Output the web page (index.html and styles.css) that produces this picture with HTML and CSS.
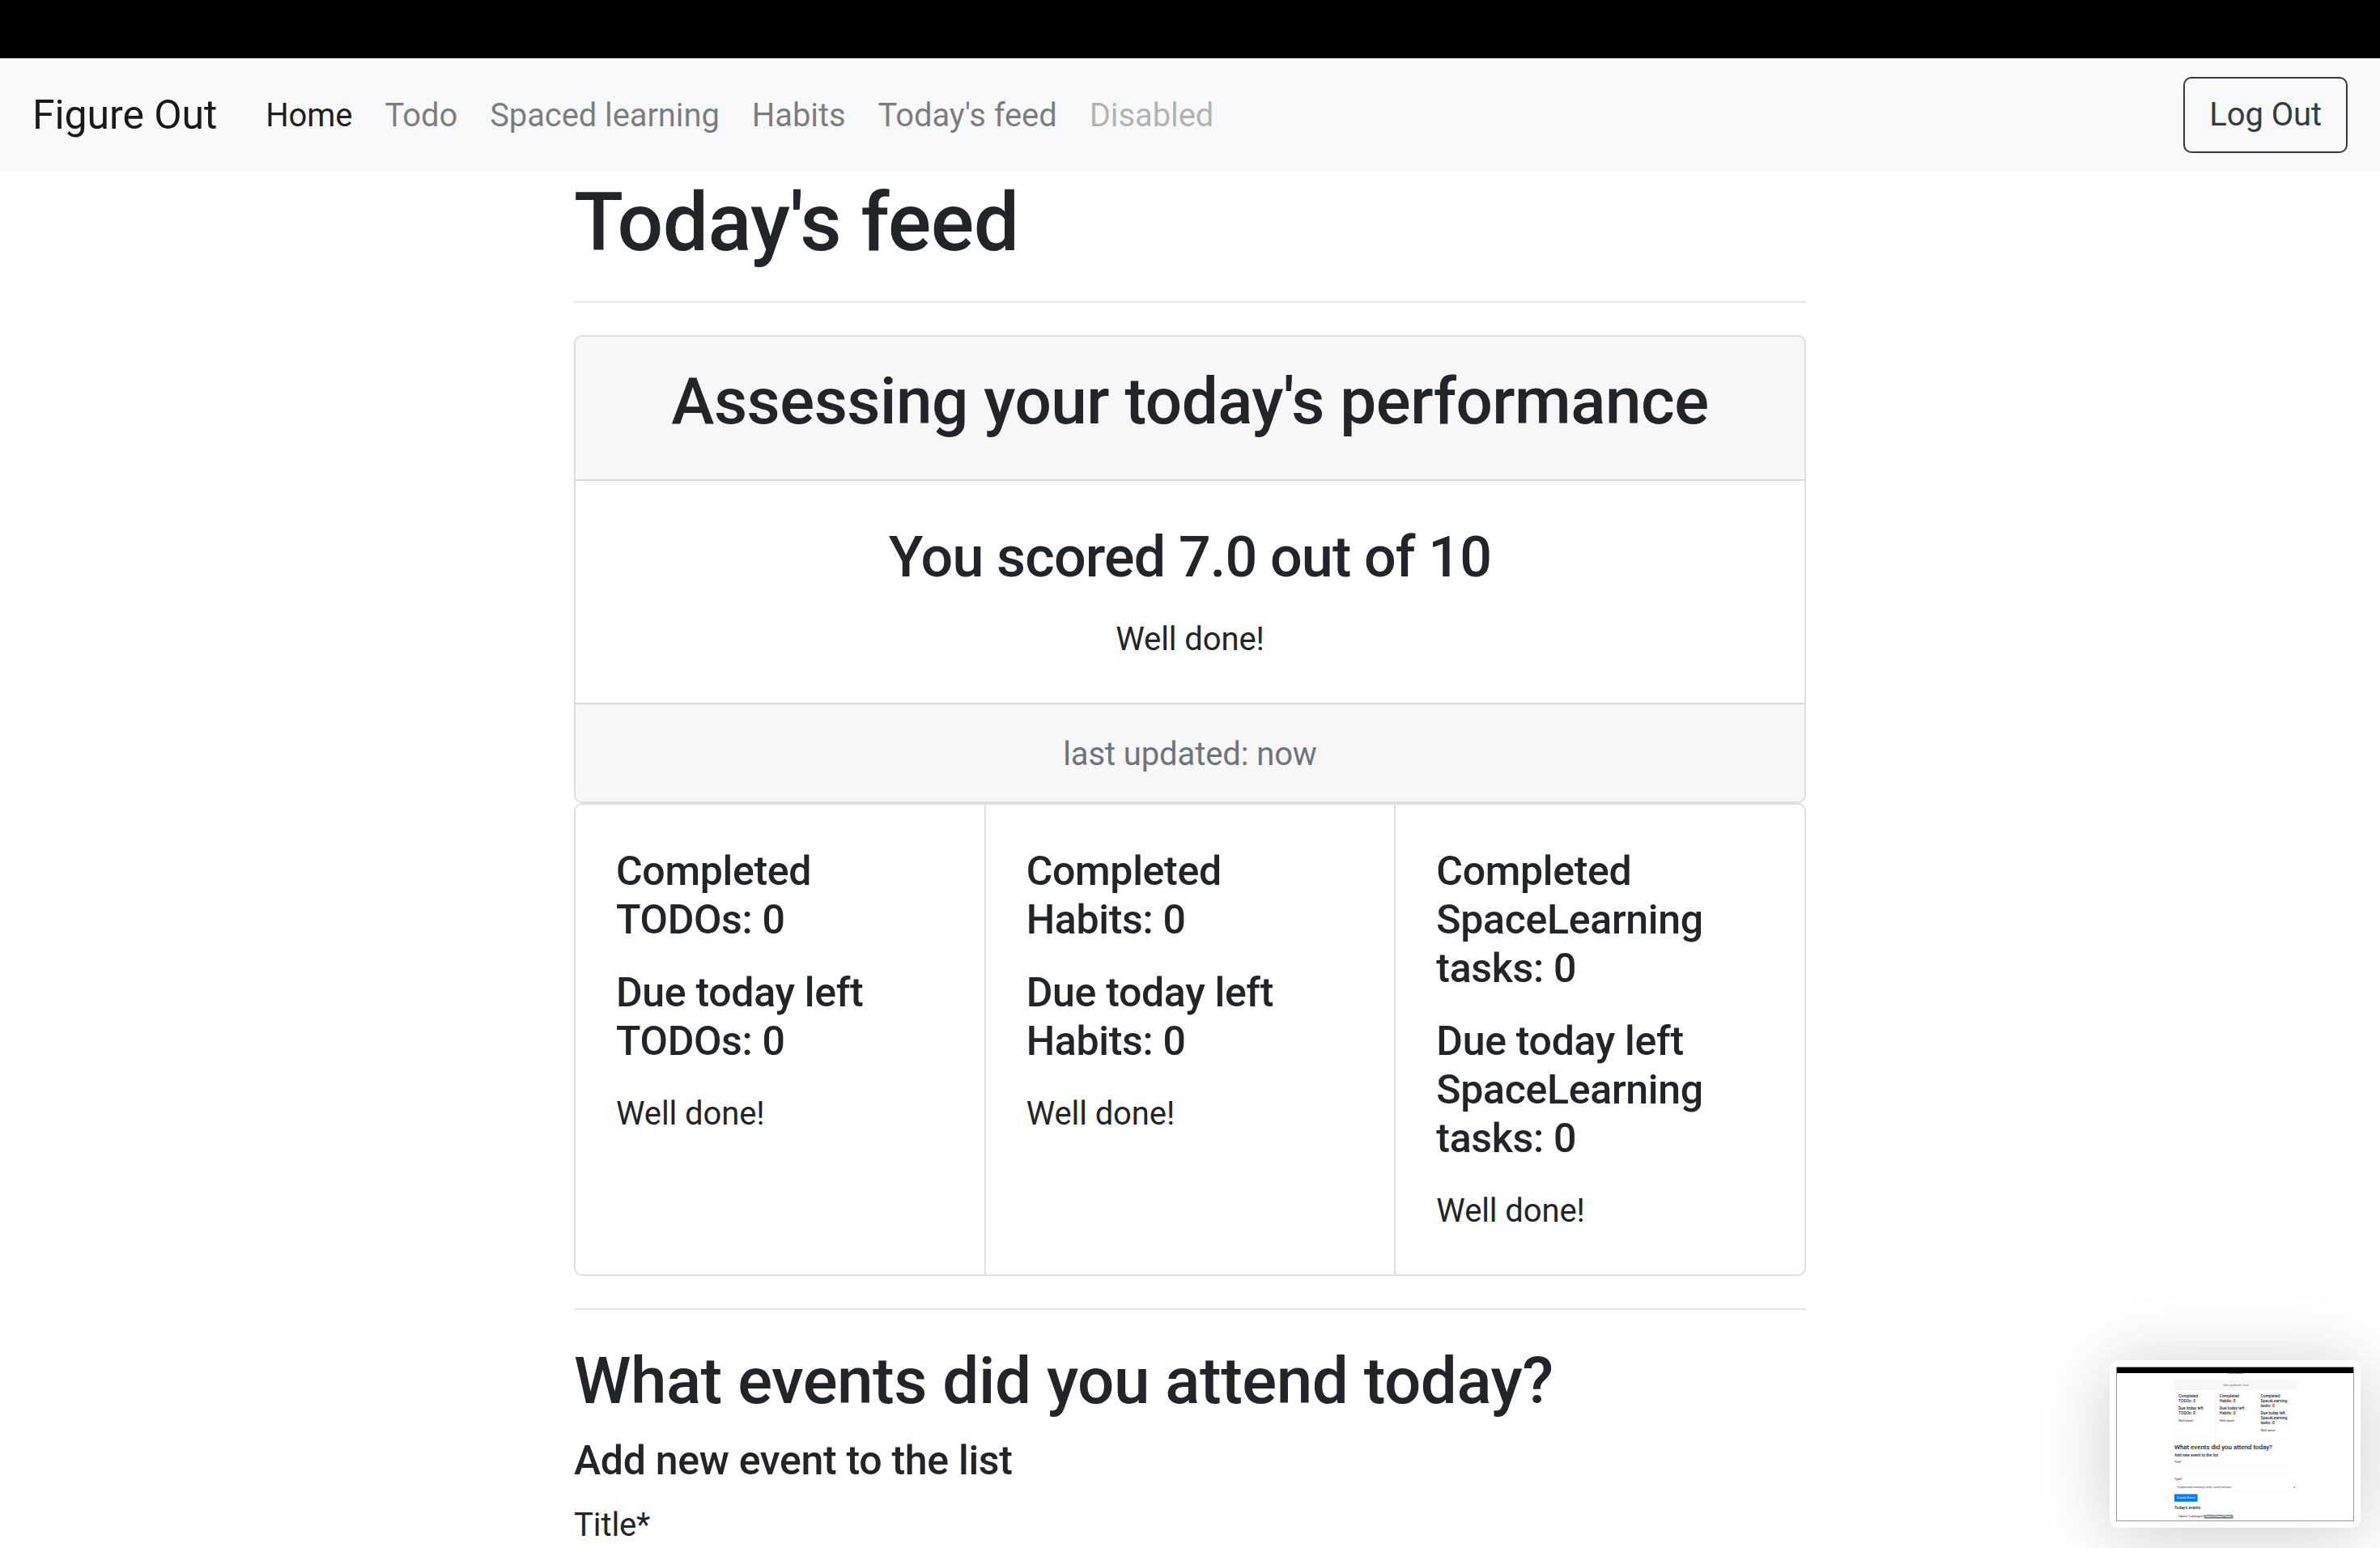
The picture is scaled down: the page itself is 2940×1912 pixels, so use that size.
FILE: index.html
```html
<!DOCTYPE html>
<html lang="en">
<head>
<meta charset="utf-8">
<title>Figure Out</title>
<link rel="stylesheet" href="styles.css">
</head>
<body>
<div class="topbar"></div>
<div class="page">
  <nav class="navbar">
    <a class="brand">Figure Out</a>
    <ul class="nav">
      <li><a class="nav-link active">Home</a></li>
      <li><a class="nav-link">Todo</a></li>
      <li><a class="nav-link">Spaced learning</a></li>
      <li><a class="nav-link">Habits</a></li>
      <li><a class="nav-link">Today's feed</a></li>
      <li><a class="nav-link disabled">Disabled</a></li>
    </ul>
    <button type="button" class="btn btn-outline">Log Out</button>
  </nav>
  <main class="container">
    <h1>Today's feed</h1>
    <hr>
    <section class="card">
      <div class="card-header"><h2>Assessing your today's performance</h2></div>
      <div class="card-body centered">
        <h3 class="card-title">You scored 7.0 out of 10</h3>
        <p class="card-text">Well done!</p>
      </div>
      <div class="card-footer">last updated: now</div>
    </section>
    <div class="card-group">
      <div class="card">
        <div class="card-body">
          <h5 class="card-title">Completed TODOs: 0</h5>
          <h5 class="card-title">Due today left TODOs: 0</h5>
          <p class="card-text">Well done!</p>
        </div>
      </div>
      <div class="card">
        <div class="card-body">
          <h5 class="card-title">Completed Habits: 0</h5>
          <h5 class="card-title">Due today left Habits: 0</h5>
          <p class="card-text">Well done!</p>
        </div>
      </div>
      <div class="card">
        <div class="card-body">
          <h5 class="card-title">Completed SpaceLearning tasks: 0</h5>
          <h5 class="card-title">Due today left SpaceLearning tasks: 0</h5>
          <p class="card-text">Well done!</p>
        </div>
      </div>
    </div>
    <hr>
    <h2>What events did you attend today?</h2>
    <h5>Add new event to the list</h5>
    <form class="event-form">
      <div class="form-group">
        <label>Title*</label>
      </div>
    </form>
  </main>
</div>

<div class="thumb">
  <div class="shot">
    <div class="mini">
      <div class="topbar mini-bar"></div>
      <div class="mini-view">
        <div class="container mini-content">
          <section class="card mini-card">
            <div class="card-body centered">
              <p class="card-text">Well done!</p>
            </div>
            <div class="card-footer">last updated: now</div>
          </section>
          <div class="card-group">
            <div class="card">
              <div class="card-body">
                <h5 class="card-title">Completed TODOs: 0</h5>
                <h5 class="card-title">Due today left TODOs: 0</h5>
                <p class="card-text">Well done!</p>
              </div>
            </div>
            <div class="card">
              <div class="card-body">
                <h5 class="card-title">Completed Habits: 0</h5>
                <h5 class="card-title">Due today left Habits: 0</h5>
                <p class="card-text">Well done!</p>
              </div>
            </div>
            <div class="card">
              <div class="card-body">
                <h5 class="card-title">Completed SpaceLearning tasks: 0</h5>
                <h5 class="card-title">Due today left SpaceLearning tasks: 0</h5>
                <p class="card-text">Well done!</p>
              </div>
            </div>
          </div>
          <hr>
          <h2>What events did you attend today?</h2>
          <h5>Add new event to the list</h5>
          <form class="event-form">
            <div class="form-group">
              <label>Title*</label>
              <input class="form-control" type="text">
            </div>
            <div class="form-group">
              <label>Type*</label>
              <div class="select-wrap">
                <select class="custom-select"><option>Unplanned meeting after work/school</option></select>
                <svg class="select-arrow" viewBox="0 0 4 5"><path fill="#343a40" d="M2 0L0 2h4zm0 5L0 3h4z"/></svg>
              </div>
            </div>
            <button type="button" class="btn btn-primary">Create Event</button>
          </form>
          <h5 class="events-title">Today's events</h5>
          <ul class="list-group">
            <li class="list-group-item">Opera "Lohengrin"<span class="badge">Concert/Cinema/Theatre</span></li>
          </ul>
        </div>
      </div>
    </div>
  </div>
</div>
</body>
</html>
```

FILE: styles.css
```css
* { box-sizing: border-box; }
html { overflow: hidden; }
body {
  margin: 0;
  font-family: Roboto, "Liberation Sans", Arial, sans-serif;
  font-size: 40px;
  line-height: 1.5;
  letter-spacing: -0.1px;
  color: #212529;
  background: #fff;
}
.topbar { height: 72px; background: #000; }

.navbar {
  display: flex;
  align-items: center;
  padding: 20px 40px;
  background: #f8f9fa;
}
.brand {
  font-size: 50px;
  line-height: 75px;
  padding: 13px 0 12px;
  margin-right: 40px;
  color: rgba(0,0,0,.9);
}
.nav { display: flex; list-style: none; margin: 0; padding: 0; }
.nav-link { display: block; padding: 21px 20px 19px; color: rgba(0,0,0,.5); }
.nav-link.active { color: rgba(0,0,0,.9); }
.nav-link.disabled { color: rgba(0,0,0,.3); }

.btn {
  font: inherit;
  letter-spacing: inherit;
  line-height: 60px;
  padding: 15px 30px;
  border: 2px solid transparent;
  border-radius: 10px;
  background: transparent;
}
.btn-outline { margin-left: auto; color: #343a40; border-color: #343a40; }
.btn-primary { color: #fff; background: #007bff; border-color: #007bff; }

.container { width: 1522px; margin: 0 auto; }
h1, h2, h3, h5 {
  margin: 0 0 20px;
  font-weight: 500;
  line-height: 1.2;
  letter-spacing: -0.006em;
}
h1 { font-size: 100px; padding-top: 6px; line-height: 114px; }
h2 { font-size: 80px; }
h3 { font-size: 70px; letter-spacing: -0.012em; }
h5 { font-size: 50px; }
hr { margin: 40px 0; border: 0; border-top: 2px solid rgba(0,0,0,.1); }

.card {
  background: #fff;
  border: 2px solid rgba(0,0,0,.125);
  border-radius: 10px;
}
.card-header {
  padding: 32px 50px 28px;
  background: rgba(0,0,0,.03);
  border-bottom: 2px solid rgba(0,0,0,.125);
  border-radius: 8px 8px 0 0;
  text-align: center;
}
.card-body { padding: 52px 50px 48px; }
.centered { text-align: center; }
.card-footer {
  padding: 32px 50px 28px;
  background: rgba(0,0,0,.03);
  border-top: 2px solid rgba(0,0,0,.125);
  border-radius: 0 0 8px 8px;
  text-align: center;
  color: #6c757d;
}
.card-title { margin-bottom: 30px; }
.card-text { margin: 0; }

.card-group { display: flex; }
.card-group .card { flex: 1 0 0; min-width: 0; border-radius: 0; }
.card-group .card + .card { border-left: 0; }
.card-group .card:first-child { border-radius: 10px 0 0 10px; }
.card-group .card:last-child { border-radius: 0 10px 10px 0; }

label { display: inline-block; margin-bottom: 20px; }
.form-group { margin-bottom: 40px; }
.form-control, .custom-select {
  display: block;
  width: 100%;
  height: 95px;
  padding: 15px 30px;
  font: inherit;
  color: #495057;
  background: #fff;
  border: 2px solid #ced4da;
  border-radius: 10px;
}
.select-wrap { position: relative; }
.custom-select { appearance: none; -webkit-appearance: none; padding-right: 70px; }
.select-arrow {
  position: absolute;
  right: 30px;
  top: 35px;
  width: 20px;
  height: 25px;
}
.events-title { margin-top: 40px; }
.list-group { list-style: none; margin: 0; padding: 0; }
.list-group-item {
  padding: 30px 50px;
  border: 2px solid rgba(0,0,0,.125);
  border-radius: 10px;
}
.badge {
  display: inline-block;
  padding: .25em .4em;
  font-size: 75%;
  font-weight: 700;
  line-height: 1;
  color: #fff;
  background: #6c757d;
  border-radius: 10px;
}

/* screenshot preview floating in the corner */
.thumb {
  position: fixed;
  right: 24px;
  bottom: 25px;
  width: 310px;
  height: 207px;
  padding: 8px;
  background: #fff;
  border-radius: 12px;
  box-shadow: 0 8px 90px rgba(0,0,0,.2);
}
.shot {
  width: 294px;
  height: 191px;
  border: 1px solid #9a9a9a;
  overflow: hidden;
}
.mini {
  width: 2940px;
  height: 1910px;
  transform: scale(.1);
  transform-origin: 0 0;
  background: #fff;
}
.mini-bar { height: 70px; }
.mini-view { height: 1840px; overflow: hidden; }
.mini-content { margin-top: -82px; }
.mini-card { border-top: 0; border-radius: 0 0 10px 10px; }
```
